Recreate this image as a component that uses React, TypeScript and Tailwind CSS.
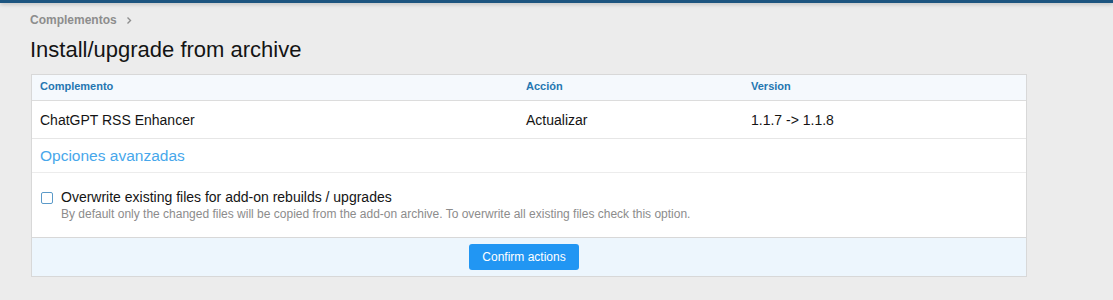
import React from 'react';

export default function App() {
  return (
    <div className="min-h-[300px] w-full bg-[#ececec] font-['Liberation_Sans',Arial,sans-serif]">
      {/* barra superior */}
      <div className="h-[3px] bg-[#1d5580] shadow-[0_1px_4px_rgba(0,0,0,0.25)]" />

      <div className="pl-[30px] pr-[86px]">
        <div className="flex items-center gap-[8px] pt-[8px] text-[12px] font-bold text-[#8d8d8d]">
          <span>Complementos</span>
          <svg width="8" height="9" viewBox="0 0 8 9" fill="none" stroke="#8d8d8d" strokeWidth="1.4">
            <path d="M2.5 1.5L5.5 4.5L2.5 7.5" />
          </svg>
        </div>

        <h1 className="mt-[8px] text-[22px] leading-[26px] font-normal text-[#141414]">
          Install/upgrade from archive
        </h1>

        <div className="mt-[11px] ml-px border border-[#d8d8d8] bg-white">
          {/* cabecera */}
          <div className="grid grid-cols-[486px_225px_1fr] h-[26px] items-center bg-[#f5f9fd] border-b border-[#dcdcdc] px-[8px] pb-[2px] text-[11px] font-bold text-[#2577b1]">
            <span>Complemento</span>
            <span>Acción</span>
            <span>Version</span>
          </div>

          <div className="grid grid-cols-[486px_225px_1fr] h-[38px] items-center border-b border-[#e6e6e6] px-[8px] pt-[2px] text-[14px] text-[#141414]">
            <span>ChatGPT RSS Enhancer</span>
            <span>Actualizar</span>
            <span>1.1.7 -&gt; 1.1.8</span>
          </div>

          <div className="flex h-[34px] items-center border-b border-[#ececec] px-[8px] text-[15.5px] text-[#47a7eb]">
            Opciones avanzadas
          </div>

          <div className="h-[64px] px-[9px] pt-[16px]">
            <label className="flex items-start gap-[8px]">
              <span className="mt-[3px] h-[12px] w-[12px] shrink-0 rounded-[2px] border border-[#5b9ac9] bg-white" />
              <span className="flex flex-col">
                <span className="text-[14px] leading-[17px] text-[#141414]">
                  Overwrite existing files for add-on rebuilds / upgrades
                </span>
                <span className="mt-[1px] text-[12px] leading-[15px] text-[#8c8c8c]">
                  By default only the changed files will be copied from the add-on archive. To overwrite all existing files check this option.
                </span>
              </span>
            </label>
          </div>

          <div className="flex h-[39px] items-center justify-center border-t border-[#d8d8d8] bg-[#edf6fd] pr-[10px]">
            <button className="h-[26px] rounded-[3px] bg-[#2196f3] px-[13px] text-[12px] text-white">
              Confirm actions
            </button>
          </div>
        </div>
      </div>
    </div>
  );
}
